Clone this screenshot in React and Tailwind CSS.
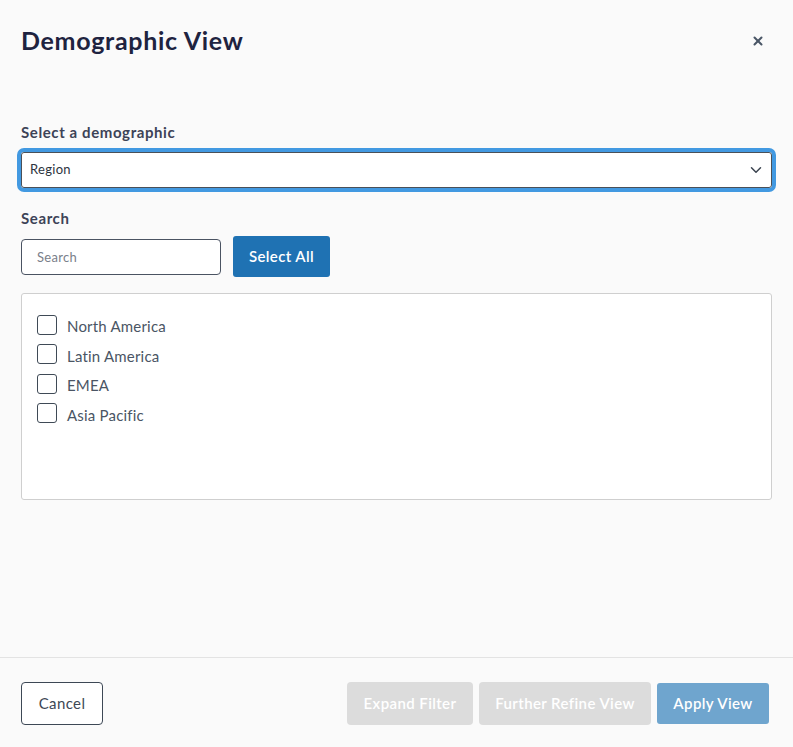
import { ChevronDown, X } from 'lucide-react';

const regions = ['North America', 'Latin America', 'EMEA', 'Asia Pacific'];

export default function App() {
  return (
    <div
      className="w-[793px] h-[747px] bg-[#fafafa] flex flex-col"
      style={{ fontFamily: 'Lato, "Open Sans", sans-serif' }}
    >
      {/* Header */}
      <div className="flex items-start justify-between pl-[21px] pr-[28px] pt-[25px]">
        <h1 className="text-[25px] leading-[30px] font-bold text-[#1e2340] tracking-[0.7px]">Demographic View</h1>
        <button className="mt-[9px] text-[#4a5666]">
          <X size={14} strokeWidth={3.5} />
        </button>
      </div>

      {/* Body */}
      <div className="flex-1 px-[21px] pt-[68px]">
        <label className="block text-[15px] leading-[18px] font-bold text-[#3d4357] tracking-[0.6px]">Select a demographic</label>
        <div className="mt-[7px] -mx-[4px] rounded-[7px] border-[4px] border-[#4299e1]">
          <div className="h-[36px] bg-white border border-[#4a5058] rounded-[3px] flex items-center justify-between pl-[8px] pr-[6px]">
            <span className="text-[13px] text-[#2d3440] tracking-[0.3px]">Region</span>
            <ChevronDown size={18} strokeWidth={2} className="text-[#3b4450]" />
          </div>
        </div>

        <label className="block mt-[17px] text-[15px] leading-[18px] font-bold text-[#3d4357] tracking-[0.6px]">Search</label>
        <div className="mt-[9px] flex items-center gap-[12px]">
          <input
            placeholder="Search"
            className="w-[200px] h-[36px] bg-white border border-[#4a5362] rounded-[4px] px-[15px] text-[13px] tracking-[0.3px] placeholder:text-[#7a808a] outline-none"
          />
          <button className="h-[41px] w-[97px] rounded-[3px] bg-[#1f72b3] text-white text-[15px] font-semibold tracking-[0.4px]">
            Select All
          </button>
        </div>

        <div className="mt-[16px] h-[207px] bg-white border border-[#cfcfcf] rounded-[3px] pt-[16px] pl-[15px]">
          {regions.map((r) => (
            <label key={r} className="flex items-center h-[29.5px] gap-[10px]">
              <span className="w-[20px] h-[20px] rounded-[3px] border border-[#3f4a56] bg-white" />
              <span className="text-[15px] text-[#4a5564] mt-[3px] tracking-[0.2px]">{r}</span>
            </label>
          ))}
        </div>
      </div>

      {/* Footer */}
      <div className="border-t border-[#e3e3e3] h-[90px] flex items-center justify-between pl-[21px] pr-[24px] pt-[2px]">
        <button className="h-[43px] w-[82px] rounded-[4px] border border-[#3d4855] bg-white text-[15px] text-[#3d4855] tracking-[0.4px]">
          Cancel
        </button>
        <div className="flex items-center gap-[6px]">
          <button className="h-[43px] w-[126px] rounded-[4px] bg-[#dcdcdc] text-white text-[15px] font-semibold tracking-[0.4px]">
            Expand Filter
          </button>
          <button className="h-[43px] w-[172px] rounded-[4px] bg-[#dcdcdc] text-white text-[15px] font-semibold tracking-[0.4px]">
            Further Refine View
          </button>
          <button className="h-[41px] w-[112px] rounded-[3px] bg-[#6fa5ce] text-white text-[15px] font-semibold tracking-[0.4px]">
            Apply View
          </button>
        </div>
      </div>
    </div>
  );
}
